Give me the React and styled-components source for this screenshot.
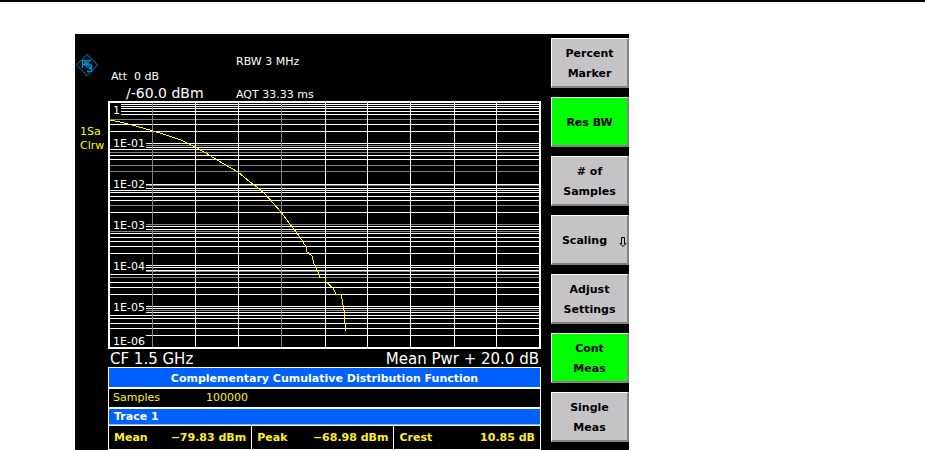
import React from 'react';
import styled, { createGlobalStyle } from 'styled-components';

const GlobalStyle = createGlobalStyle`
  * {
    box-sizing: border-box;
  }

  body {
    margin: 0;
    background: #fff;
    font-family: "DejaVu Sans", Verdana, sans-serif;
    font-size: 11px;
  }
`;

const Page = styled.main`
  display: grid;
  grid-template-columns: 75fr 554fr 296fr;
  border-top: 2px solid #000;
  padding-top: 32px;
`;

const Analyzer = styled.section`
  grid-column: 2;
  display: grid;
  grid-template-columns: 33px 1fr 78px;
  background: #000;
  color: #fff;
`;

const Side = styled.aside`
  display: flex;
  flex-direction: column;
  padding-top: 19px;
`;

const Logo = styled.svg`
  display: block;
  width: 24px;
  height: 24px;
`;

const TraceInfo = styled.p`
  margin: 48px 0 0 5px;
  color: #ffff00;
  line-height: 14px;
  white-space: nowrap;
`;

const Measurement = styled.div`
  min-width: 0;
  padding-right: 10px;
`;

const Settings = styled.header`
  display: grid;
  grid-template-columns: 125px 1fr;
  height: 67px;
  padding: 20px 3px 0;
`;

const SettingColumn = styled.div`
  display: flex;
  flex-direction: column;
  gap: ${({ $gap }) => $gap};
  padding-top: ${({ $top }) => $top || 0};
  line-height: 16px;
  white-space: pre;
`;

const Reference = styled.span`
  padding-left: 15px;
  font-size: 14px;
`;

const Chart = styled.svg`
  display: block;
  width: 100%;
`;

const AxisInfo = styled.div`
  display: flex;
  justify-content: space-between;
  padding: 2px 2px 0;
  font-size: 15px;
  line-height: 16px;
`;

const ResultTable = styled.table`
  width: 100%;
  table-layout: fixed;
  border-collapse: separate;
  border-spacing: 0;
  border: solid #fff;
  border-width: ${({ $top }) => $top} 1px 1px;
  color: #ffef21;
  text-align: left;
`;

const Title = styled.caption`
  height: 20px;
  border: 1px solid #fff;
  border-bottom: 0;
  background: #0061ff;
  color: #fff;
  font-weight: bold;
  line-height: 21px;
`;

const SampleRow = styled.tr`
  height: 18px;
  line-height: 18px;
`;

const SampleName = styled.th`
  width: 94px;
  padding: 0 4px;
  font-weight: normal;
`;

const SampleCount = styled.td`
  padding: 0 3px;
`;

const TraceTitle = styled.caption`
  height: 17px;
  padding-left: 5px;
  border: solid #fff;
  border-width: 1px 1px 0;
  background: #0061ff;
  box-shadow: inset 0 -1px #84b2ff;
  color: #fff;
  font-weight: bold;
  line-height: 16px;
  text-align: left;
`;

const ResultCell = styled.td`
  height: 23px;
  padding: 0 5px;
  border-left: ${({ $first }) => ($first ? 0 : '1px solid #fff')};
  font-weight: bold;
  line-height: 23px;
`;

const Result = styled.div`
  display: flex;
  justify-content: space-between;
  white-space: nowrap;
`;

const Softkeys = styled.nav`
  display: flex;
  flex-direction: column;
  gap: 9px;
  padding: 4px 0 8px;
`;

const Softkey = styled.button`
  position: relative;
  width: 100%;
  height: 50px;
  padding: 2px 0 0;
  border: solid;
  border-width: 1px 2px 2px 1px;
  border-color: #fff #848284 #848284 #fff;
  background: ${({ $active }) => ($active ? '#00ff00' : '#c6c3c6')};
  color: #000;
  font: bold 11px/20px "DejaVu Sans", Verdana, sans-serif;
  text-align: center;
  white-space: pre-line;
`;

const KeyLabel = styled.span`
  padding-right: ${({ $menu }) => ($menu ? '10px' : 0)};
`;

const MenuArrow = styled.svg`
  position: absolute;
  top: 20px;
  right: 0;
  width: 9px;
  height: 12px;
`;

const softkeys = [
  { label: 'Percent\nMarker' },
  { label: 'Res BW', active: true },
  { label: '# of\nSamples' },
  { label: 'Scaling', menu: true },
  { label: 'Adjust\nSettings' },
  { label: 'Cont\nMeas', active: true },
  { label: 'Single\nMeas' },
];

const results = [
  { name: 'Mean', value: '−79.83 dBm', width: '33%' },
  { name: 'Peak', value: '−68.98 dBm', width: '33%' },
  { name: 'Crest', value: '10.85 dB', width: '34%' },
];

const GRID_X = [44, 87, 130, 173, 217, 259, 302, 346, 388];
const DIM_X = [44, 173];

const GRID_Y = [
  3, 5, 7, 10, 13, 18, 23, 30,
  42, 44, 46, 48, 51, 54, 58, 64, 70,
  83, 84, 87, 89, 91, 95, 99, 104, 111,
  123, 125, 128, 130, 132, 136, 140, 145, 152,
  164, 166, 169, 170, 173, 176, 181, 186, 193,
  205, 207, 209, 211, 214, 217, 222, 227, 234,
];
const DIM_Y = [18, 44, 51, 64, 70, 84, 104, 123, 130, 170, 176, 209];

const AXIS_LABELS = [
  { text: '1', y: 13, width: 11 },
  { text: '1E-01', y: 46, width: 36 },
  { text: '1E-02', y: 87, width: 36 },
  { text: '1E-03', y: 128, width: 36 },
  { text: '1E-04', y: 169, width: 36 },
  { text: '1E-05', y: 210, width: 36 },
  { text: '1E-06', y: 244, width: 36 },
];

const TRACE = '2,19 12,21 24,24 42,29 58,34 73,39 87,46 98,52 109,59 130,71 142,81 '
  + '149,86 157,93 173,111 181,122 192,136 198,146 198,150 204,155 206,163 '
  + '211,173 211,176 217,176 218,181 225,187 228,193 233,193 236,209 237,222 238,230';

function lineColor(dimmed) {
  return dimmed ? '#848284' : '#fff';
}

function CcdfChart() {
  return (
    <Chart viewBox="0 0 433 248" role="img" aria-label="CCDF trace">
      <g shapeRendering="crispEdges">
        {GRID_Y.map((y) => (
          <rect key={ y } x="2" y={ y } width="429" height="1" fill={ lineColor(DIM_Y.includes(y)) } />
        ))}
        {AXIS_LABELS.map(({ text, y, width }) => (
          <rect key={ text } x="2" y={ y - 10 } width={ width } height={ 12 } fill="#000" />
        ))}
        {GRID_X.map((x) => (
          <rect key={ x } x={ x } y="2" width="1" height="244" fill={ lineColor(DIM_X.includes(x)) } />
        ))}
        <rect x="1" y="1" width="431" height="246" fill="none" stroke="#fff" strokeWidth="2" />
        <polyline points={ TRACE } fill="none" stroke="#ffff00" strokeWidth="1" />
      </g>
      {AXIS_LABELS.map(({ text, y }) => (
        <text key={ text } x="5" y={ y } fill="#fff" fontSize="11">{text}</text>
      ))}
    </Chart>
  );
}

function BrandLogo() {
  return (
    <Logo viewBox="0 0 24 24" fill="none" stroke="#0092de" aria-hidden="true">
      <path d="M12 1.5 22.5 12 12 22.5 1.5 12Z" />
      <path d="M7.5 15V7.5h3l1 1v2l-1 1h-3m2 0 3 3M16 7.5h-3v3l3.500 2v3h-3M9 9l7 6M12 18.500h4l1-2" strokeWidth="1.3" />
    </Logo>
  );
}

function App() {
  return (
    <>
      <GlobalStyle />
      <Page>
        <Analyzer>
          <Side>
            <BrandLogo />
            <TraceInfo>
              1Sa
              <br />
              Clrw
            </TraceInfo>
          </Side>
          <Measurement>
            <Settings>
              <SettingColumn $gap="0" $top="15px">
                <span>{'Att  0 dB'}</span>
                <Reference>/-60.0 dBm</Reference>
              </SettingColumn>
              <SettingColumn $gap="17px">
                <span>RBW 3 MHz</span>
                <span>AQT 33.33 ms</span>
              </SettingColumn>
            </Settings>
            <CcdfChart />
            <AxisInfo>
              <span>CF 1.5 GHz</span>
              <span>Mean Pwr + 20.0 dB</span>
            </AxisInfo>
            <ResultTable $top="2px">
              <Title>Complementary Cumulative Distribution Function</Title>
              <tbody>
                <SampleRow>
                  <SampleName scope="row">Samples</SampleName>
                  <SampleCount>100000</SampleCount>
                </SampleRow>
              </tbody>
            </ResultTable>
            <ResultTable $top="1px">
              <TraceTitle>Trace 1</TraceTitle>
              <tbody>
                <tr>
                  {results.map(({ name, value, width }, index) => (
                    <ResultCell key={ name } width={ width } $first={ index === 0 }>
                      <Result>
                        <span>{name}</span>
                        <span>{value}</span>
                      </Result>
                    </ResultCell>
                  ))}
                </tr>
              </tbody>
            </ResultTable>
          </Measurement>
          <Softkeys>
            {softkeys.map(({ label, active, menu }) => (
              <Softkey key={ label } type="button" $active={ active }>
                <KeyLabel $menu={ menu }>{label}</KeyLabel>
                {menu && (
                  <MenuArrow viewBox="0 0 9 12" fill="none" stroke="#000" aria-hidden="true">
                    <path d="M3.5 1.5h3v6h1.500l-3 3-3-3h1.500Z" />
                  </MenuArrow>
                )}
              </Softkey>
            ))}
          </Softkeys>
        </Analyzer>
      </Page>
    </>
  );
}

export default App;
